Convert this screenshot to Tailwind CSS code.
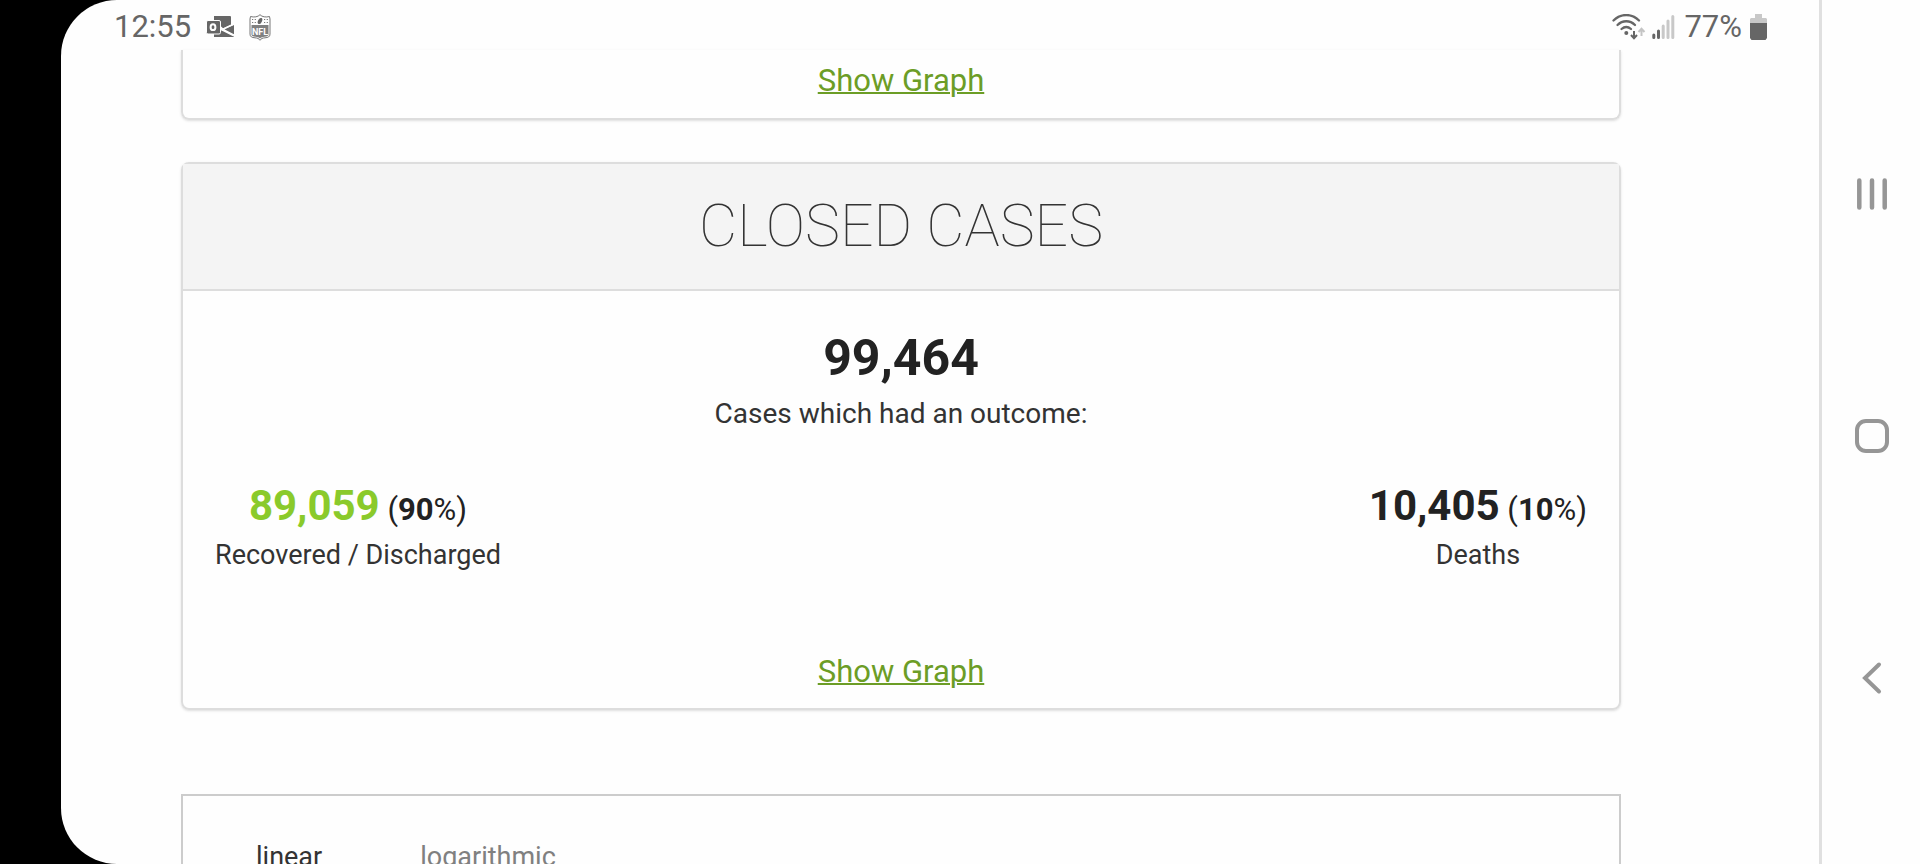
<!DOCTYPE html>
<html lang="en">
<head>
  <meta charset="UTF-8">
  <meta name="viewport" content="width=device-width, initial-scale=1.0">
  <title>Closed Cases</title>
  <script src="https://cdn.jsdelivr.net/npm/@tailwindcss/browser@4"></script>
</head>
<body class="bg-black font-[Roboto,sans-serif] text-[#222]">
  <div class="flex h-screen overflow-hidden pl-[61px]">

    <!-- Screen -->
    <div class="flex flex-1 flex-col overflow-hidden rounded-l-[56px] bg-[#fefefe]">

      <!-- Status bar -->
      <header class="flex h-[50px] shrink-0 items-center justify-between pt-1 pr-[52px] pl-[53px] text-[31px] leading-[46px] text-[#666]">
        <div class="flex items-center">
          <span>12:55</span>
          <svg class="ml-[15px] h-[22px] w-[28px]" viewBox="0 0 28 22">
            <path d="M8 0h16q1 0 1 1v9.500L15 15h13v5q0 1-1 1H8z" fill="#666"/>
            <path d="M13 10l4 3.500L26 9.500M15 13l13 6.500" stroke="#fefefe" stroke-width="2" fill="none"/>
            <path d="M17 13.500l11-4.500v9.500z" fill="#666"/>
            <path d="M13 10.500l3.500 3L28 8M16 13l12 6" stroke="#fefefe" stroke-width="1.500" fill="none"/>
            <rect x=".5" y="4.500" width="14" height="13.500" rx="1.500" fill="#666" stroke="#fefefe" stroke-width="1"/>
            <ellipse cx="7" cy="11.200" rx="2.400" ry="2.900" fill="none" stroke="#fefefe" stroke-width="2"/>
          </svg>
          <svg class="ml-[15px] h-[27px] w-[22px]" viewBox="0 0 22 27">
            <path d="M11 .7C9 3 5 3.500 1.500 2.500L1 5v15c0 3 2 3.500 5 3.800 2.500.2 4 .8 5 2.500 1-1.700 2.500-2.300 5-2.500 3-.3 5-.8 5-3.800V5l-.5-2.500C17 3.500 13 3 11 .7z" fill="#fefefe" stroke="#777" stroke-width="1"/>
            <path d="M2.500 11h17v9.500c0 1.500-1.500 2-4 2.200-2 .2-3.500.7-4.500 1.800-1-1.100-2.500-1.600-4.500-1.800-2.500-.2-4-.7-4-2.200z" fill="#808080"/>
            <path d="M3 5.500h4M15 5.500h4M3 8.500h4M15 8.500h4" stroke="#777" stroke-width="1.200" stroke-dasharray="1.200 1.500"/>
            <ellipse cx="11" cy="7" rx="1.900" ry="3.300" transform="rotate(28 11 7)" fill="#666"/>
            <text x="11" y="20.500" text-anchor="middle" font-family="Roboto, sans-serif" font-size="9" font-weight="700" fill="#fefefe">NFL</text>
          </svg>
        </div>
        <div class="flex items-center">
          <svg class="h-[26px] w-[34px]" viewBox="0 0 34 26">
            <g fill="none" stroke="#666" stroke-width="2.300" stroke-linecap="round">
              <path d="M1.500 6.500C8.500-.8 20-.8 27 6.500"/>
              <path d="M5.500 11c5-5 12.500-5 17.500 0"/>
              <path d="M9.500 15c3-2.600 6.500-2.600 9.500 0"/>
            </g>
            <circle cx="14.300" cy="19" r="2" fill="#666"/>
            <path d="M22 17v7M19 21l3 3.200 3-3.200" fill="none" stroke="#666" stroke-width="2"/>
            <path d="M29.500 22v-7M26.500 18l3-3.200 3 3.200" fill="none" stroke="#c4c4c4" stroke-width="2"/>
          </svg>
          <svg class="ml-[6px] h-[24px] w-[23px]" viewBox="0 0 23 24">
            <g stroke-width="3" stroke-linecap="round">
              <path d="M1.800 20v2.500M6.500 16v6.500" stroke="#666"/>
              <path d="M11.200 11v11.500M16 6v16.500M20.800 1.500v21" stroke="#c8c8c8"/>
            </g>
          </svg>
          <span class="ml-[9px]">77%</span>
          <svg class="ml-[8px] h-[26px] w-[17px]" viewBox="0 0 17 26">
            <path d="M5 0h7v4h4l1 1v4H0V5l1-1h4z" fill="#c8c8c8"/>
            <path d="M0 9h17v15l-1.500 2h-14L0 24z" fill="#666"/>
          </svg>
        </div>
      </header>

      <!-- Page content -->
      <main class="flex flex-col pr-[198px] pl-[120px]">

        <!-- Previous panel, scrolled under the status bar -->
        <section class="rounded-b-lg border-2 border-t-0 border-[#ddd] pt-[11px] pb-[17px] text-center shadow-sm">
          <a href="#" class="text-[31px] leading-[40px] text-[#6c9d26] underline decoration-2">Show Graph</a>
        </section>

        <!-- Closed cases -->
        <section class="mt-[42px] rounded-lg border-2 border-[#ddd] text-center shadow-sm">
          <h2 class="border-b-2 border-[#ddd] bg-[#f4f4f4] pt-[25px] pb-[27px] text-[59px] leading-[73px] font-thin text-[#333]">CLOSED CASES</h2>
          <div class="pt-[37px] text-[50px] leading-[60px] font-bold">99,464</div>
          <div class="pt-[8px] text-[28px] leading-[36px] text-[#333]">Cases which had an outcome:</div>

          <div class="mt-[48px] flex justify-between px-8">
            <div>
              <div class="text-[31px] leading-[52px]"><strong class="text-[42px] text-[#8aca2b]">89,059</strong> (<strong>90</strong>%)</div>
              <div class="text-[27px] leading-[38px] text-[#333]">Recovered / Discharged</div>
            </div>
            <div>
              <div class="text-[31px] leading-[52px]"><strong class="text-[42px]">10,405</strong> (<strong>10</strong>%)</div>
              <div class="text-[27px] leading-[38px] text-[#333]">Deaths</div>
            </div>
          </div>

          <div class="pt-[78px] pb-[16px]">
            <a href="#" class="text-[31px] leading-[40px] text-[#6c9d26] underline decoration-2">Show Graph</a>
          </div>
        </section>

        <!-- Chart -->
        <section class="mt-[84px] flex gap-[98px] border-2 border-b-0 border-[#ccc] px-[73px] pt-[44px] text-[27px] leading-[34px]">
          <button type="button" class="text-[#333]">linear</button>
          <button type="button" class="text-[#808080]">logarithmic</button>
        </section>
      </main>
    </div>

    <!-- Navigation bar -->
    <nav class="flex w-[101px] shrink-0 flex-col border-l-3 border-[#e0e0e0] bg-[#fefefe] pt-[73px] pb-[65px] pl-[2px] text-[#969696]">
      <button type="button" aria-label="Recents" class="flex flex-1 items-center justify-center">
        <svg class="size-[36px]" viewBox="0 0 36 36" fill="none" stroke="currentColor" stroke-width="4.500" stroke-linecap="round">
          <path d="M5.300 4.500v27M18 4.500v27M30.700 4.500v27"/>
        </svg>
      </button>
      <button type="button" aria-label="Home" class="flex flex-1 items-center justify-center">
        <svg class="size-[36px]" viewBox="0 0 36 36" fill="none" stroke="currentColor" stroke-width="4">
          <rect x="3" y="3" width="30" height="30" rx="9"/>
        </svg>
      </button>
      <button type="button" aria-label="Back" class="flex flex-1 items-center justify-center">
        <svg class="size-[36px]" viewBox="0 0 36 36" fill="none" stroke="currentColor" stroke-width="4" stroke-linecap="round">
          <path d="M25 4.500L11 18l14 13.500"/>
        </svg>
      </button>
    </nav>
  </div>
</body>
</html>
